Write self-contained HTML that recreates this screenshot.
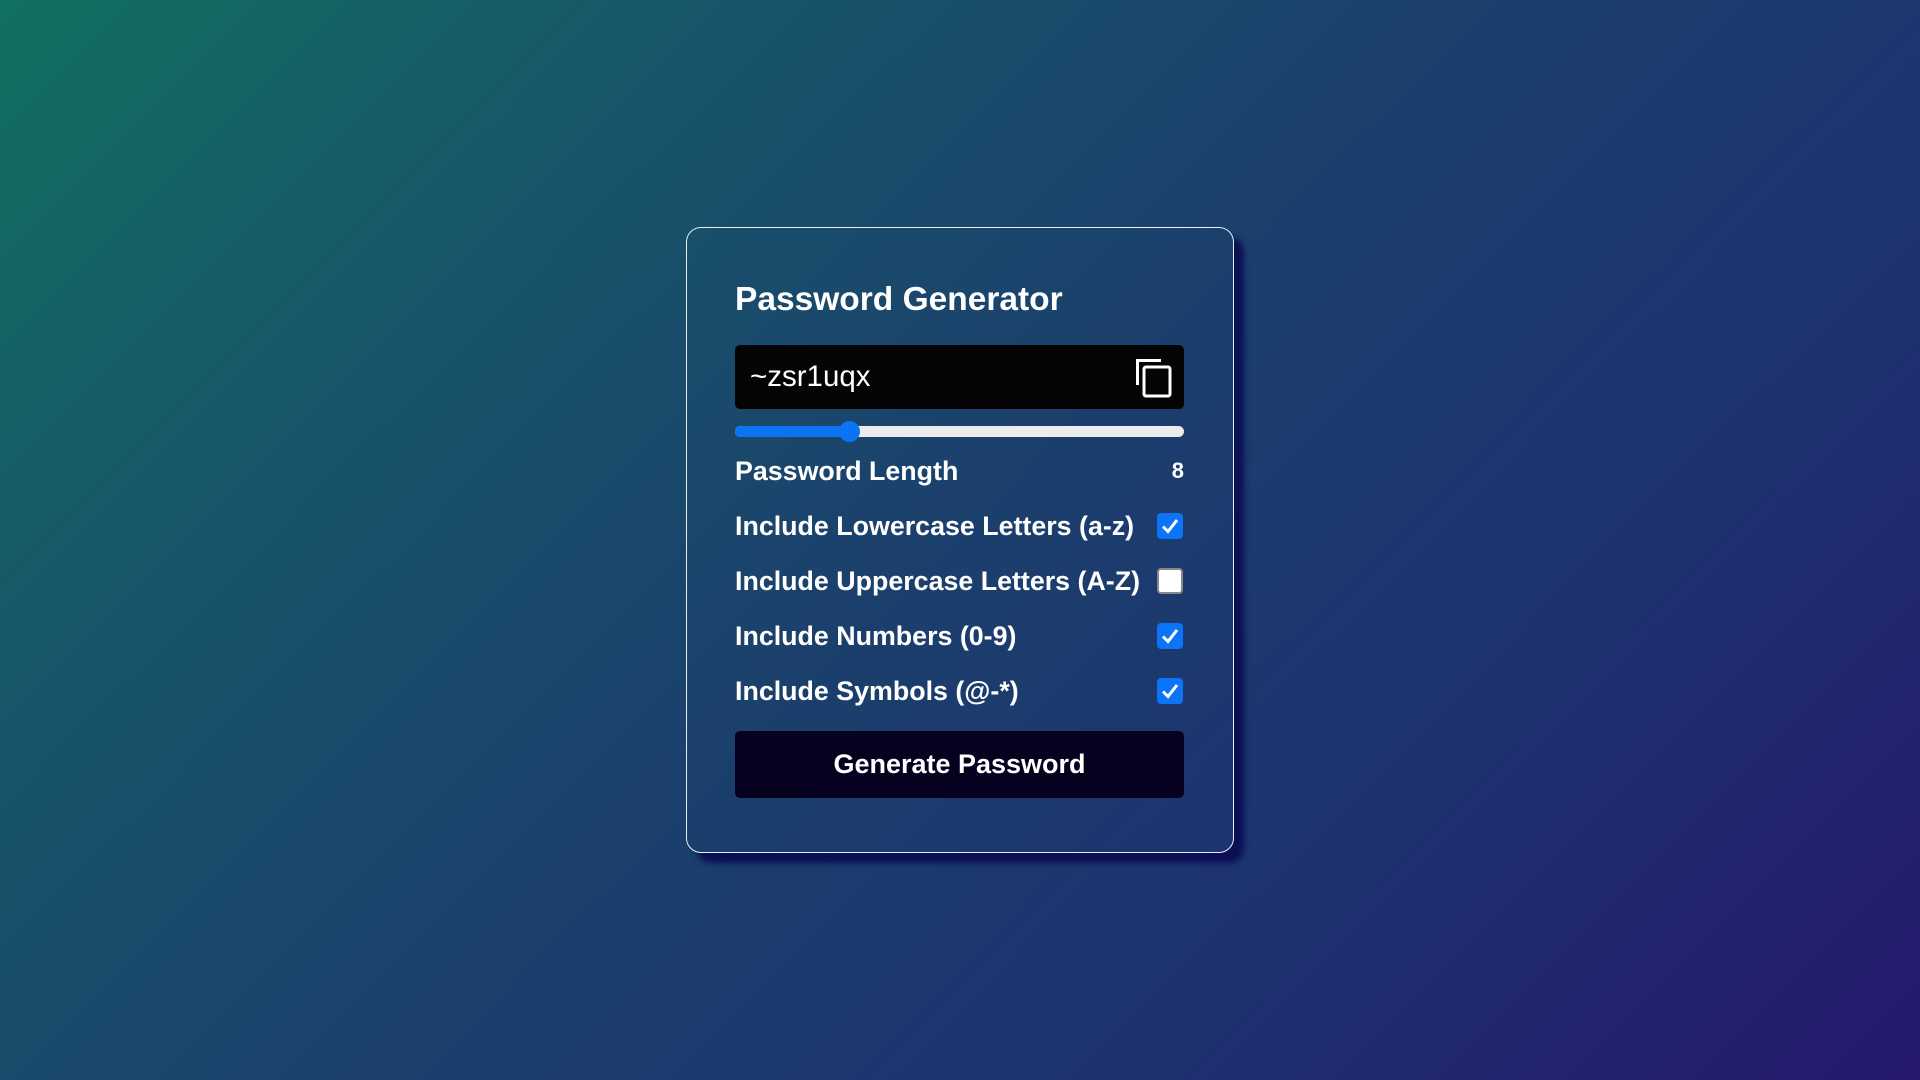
<!DOCTYPE html>
<html><head><meta charset="utf-8"><style>
*{box-sizing:border-box;margin:0;padding:0}
html,body{width:1920px;height:1080px;overflow:hidden}
body{background:linear-gradient(135deg,#11705f 0%,#18546a 25%,#1b3f6c 50%,#1d3470 70%,#25186e 100%);font-family:"Liberation Sans",Arial,sans-serif;color:#fff;position:relative}
.card{position:absolute;left:686px;top:227px;width:548px;height:626px;border:1.5px solid #e6eef5;border-radius:15px;box-shadow:10px 10px 6px rgba(8,8,80,0.85);padding:0 48px}
h1{position:absolute;left:48px;top:53px;font-size:33.5px;font-weight:bold}
.inp{position:absolute;left:48px;top:117px;width:449px;height:64px;background:#050303;border-radius:5px}
.inp span{position:absolute;left:15px;top:15px;font-size:29.5px}
.inp svg{position:absolute;left:0;top:0}
.track{position:absolute;left:48px;top:198px;width:449px;height:11px;border-radius:6px;background:#ececec}
.fill{position:absolute;left:0;top:0;width:115px;height:11px;border-radius:6px;background:#0a74f5}
.thumb{position:absolute;left:104px;top:-5px;width:21px;height:21px;border-radius:50%;background:#0a74f5}
.row{position:absolute;left:48px;width:449px;font-size:26.8px;font-weight:bold;height:30px;line-height:30px}
.row .v{position:absolute;right:0;top:0;font-size:22px}
.cb{position:absolute;right:1px;top:2px;width:26px;height:26px;border-radius:4px;background:#0b74f7}
.cb.off{background:#fff;border:2px solid #888}
.cb svg{position:absolute;left:4px;top:4px}
.btn{position:absolute;left:48px;top:503px;width:449px;height:67px;background:#05011f;border-radius:5px;text-align:center;line-height:67px;font-size:27px;font-weight:bold}
</style></head><body>
<div class="card">
<h1>Password Generator</h1>
<div class="inp"><span>~zsr1uqx</span>
<svg width="449" height="64"><path d="M402.5 40 V15.5 H426" fill="none" stroke="#fff" stroke-width="3"/><rect x="409" y="22" width="26" height="29" rx="2" fill="none" stroke="#fff" stroke-width="3"/></svg></div>
<div class="track"><div class="fill"></div><div class="thumb"></div></div>
<div class="row" style="top:228px">Password Length<span class="v">8</span></div>
<div class="row" style="top:283px">Include Lowercase Letters (a-z)<div class="cb"><svg width="18" height="18"><path d="M2 9.5 L7 14.5 L16 3" fill="none" stroke="#fff" stroke-width="3"/></svg></div></div>
<div class="row" style="top:338px">Include Uppercase Letters (A-Z)<div class="cb off"></div></div>
<div class="row" style="top:393px">Include Numbers (0-9)<div class="cb"><svg width="18" height="18"><path d="M2 9.5 L7 14.5 L16 3" fill="none" stroke="#fff" stroke-width="3"/></svg></div></div>
<div class="row" style="top:448px">Include Symbols (@-*)<div class="cb"><svg width="18" height="18"><path d="M2 9.5 L7 14.5 L16 3" fill="none" stroke="#fff" stroke-width="3"/></svg></div></div>
<div class="btn">Generate Password</div>
</div>
</body></html>
